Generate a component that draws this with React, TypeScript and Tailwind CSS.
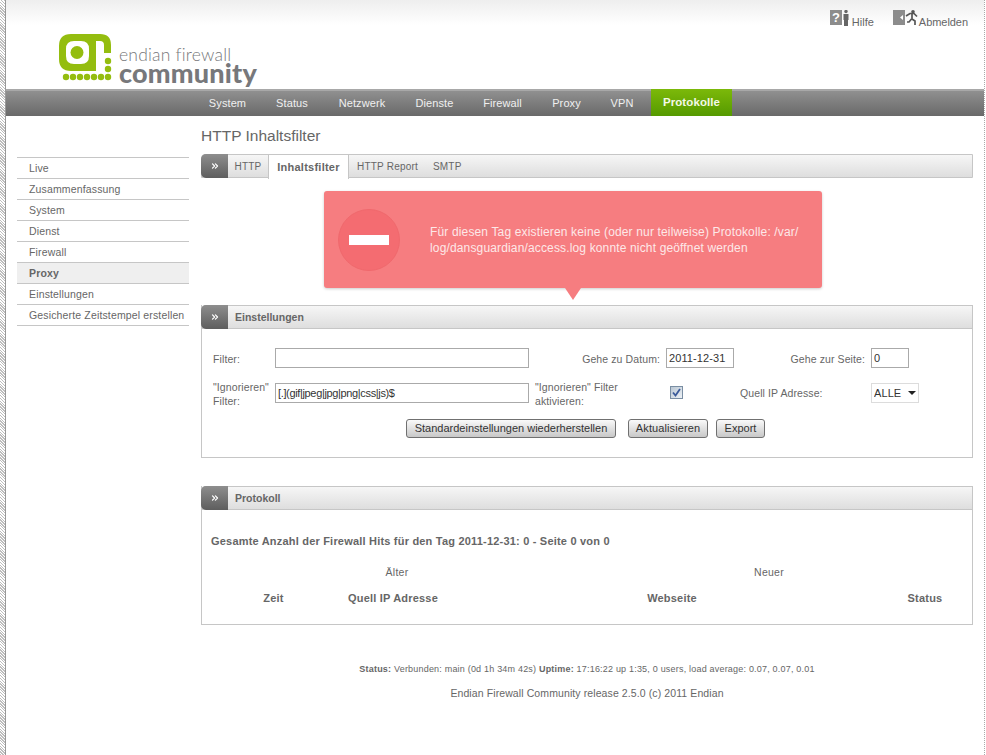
import { ChevronsRight } from 'lucide-react';

const topNav = [
  { label: 'System', width: 'w-[67px]' },
  { label: 'Status', width: 'w-[62px]' },
  { label: 'Netzwerk', width: 'w-[78px]' },
  { label: 'Dienste', width: 'w-[67px]' },
  { label: 'Firewall', width: 'w-[69px]' },
  { label: 'Proxy', width: 'w-[59px]' },
  { label: 'VPN', width: 'w-[52px]' },
];

const sideNav = ['Live', 'Zusammenfassung', 'System', 'Dienst', 'Firewall', 'Proxy', 'Einstellungen', 'Gesicherte Zeitstempel erstellen'];

function Logo() {
  return (
    <div className="flex items-start">
      <svg width="54" height="48" viewBox="0 0 54 48" className="mt-[1px]">
        <path
          fillRule="evenodd"
          fill="#94bd0f"
          d="M13 0H42Q53 0 53 11V19H46V11Q46 7 42 7H38V37H13Q1 37 1 25V12Q1 0 13 0ZM16 7Q8 7 8 15V22Q8 30 16 30H23Q31 30 31 22V15Q31 7 23 7Z"
        />
        <circle cx="19" cy="18.5" r="6.5" fill="#94bd0f" />
        {[27, 35, 43].map((y) => (
          <circle key={y} cx="50" cy={y} r="3.2" fill="#94bd0f" />
        ))}
        {[8, 15, 22, 29, 36, 43].map((x) => (
          <circle key={x} cx={x} cy="43" r="3.2" fill="#94bd0f" />
        ))}
      </svg>
      <div className="ml-[7px] mt-[13px] text-[#77787b]">
        <div className="font-['Lato',sans-serif] text-[17.5px] leading-[17px] font-light tracking-[0.2px]">endian firewall</div>
        <div className="font-['Lato',sans-serif] text-[27px] leading-[20px] font-black tracking-[0.2px]">community</div>
      </div>
    </div>
  );
}

function HelpIcon() {
  return (
    <svg width="20" height="16" viewBox="0 0 20 16">
      <rect x="0" y="0" width="12" height="15" fill="#8c8c8c" />
      <text x="6" y="12" textAnchor="middle" fontSize="13" fontWeight="700" fill="#fff" fontFamily="Liberation Sans">?</text>
      <circle cx="16" cy="1.500" r="1.700" fill="#666" />
      <path d="M13.500 4H18.500V10H18V16H14V10H13.500Z" fill="#666" />
    </svg>
  );
}

function ExitIcon() {
  return (
    <svg width="25" height="16" viewBox="0 0 25 16">
      <rect x="0" y="0" width="12" height="15" fill="#8c8c8c" />
      <path d="M7 7.500L10 5V10Z" fill="#fff" />
      <circle cx="20" cy="1.800" r="1.800" fill="#555" />
      <path d="M13 6L17 3.500H21L24 6.500M19 4V9L22 11V15M18.500 9L16 12H14" fill="none" stroke="#555" strokeWidth="1.700" />
    </svg>
  );
}

function SectionHeader({ title }: { title: string }) {
  return (
    <div className="flex h-[24px] items-stretch rounded-tl-[4px] rounded-tr-[1px] border border-[#c6c6c6] bg-gradient-to-b from-[#f6f6f6] to-[#dedede]">
      <DarkButton />
      <span className="ml-[7px] self-center pt-[1px] text-[10.500px] font-bold text-[#666]">{title}</span>
    </div>
  );
}

function DarkButton() {
  return (
    <div className="-my-[1px] -ml-[1px] flex w-[27px] items-center justify-center rounded-l-[5px] bg-gradient-to-b from-[#8e8e8e] to-[#5e5e5e]">
      <ChevronsRight size={10} strokeWidth={3} color="#fff" />
    </div>
  );
}

function TextField({ value = '', className }: { value?: string; className: string }) {
  return (
    <input
      readOnly
      value={value}
      className={`h-[20px] border border-[#aaaaaa] bg-white px-[2px] text-[11px] text-[#333] outline-none ${className}`}
    />
  );
}

function FormButton({ label, className }: { label: string; className: string }) {
  return (
    <button
      type="button"
      className={`h-[19px] whitespace-nowrap rounded-[3px] border border-[#707070] bg-gradient-to-b from-[#fafafa] to-[#c8c8c8] text-[11px] text-[#333] ${className}`}
    >
      {label}
    </button>
  );
}

export default function App() {
  return (
    <div className="flex min-h-[755px] bg-white font-['Liberation_Sans',Arial,sans-serif] text-[#666]">
      <div className="w-[5px] shrink-0 bg-[repeating-linear-gradient(45deg,#bdbdbd_0,#bdbdbd_1px,#ffffff_1px,#ffffff_2px)]" />
      <div className="w-[1px] shrink-0 bg-[#999]" />

      <div className="min-w-0 flex-1">
        <header className="relative h-[89px] bg-gradient-to-b from-[#eeeeee] to-white to-[28%] pl-[52px] pt-[33px]">
          <Logo />
          <div className="absolute right-[16px] top-[10px] flex items-start text-[11px] text-[#666]">
            <div className="flex items-start">
              <HelpIcon />
              <span className="ml-[2px] mt-[4px]">Hilfe</span>
            </div>
            <div className="ml-[19px] flex items-start">
              <ExitIcon />
              <span className="ml-[1px] mt-[4px] tracking-[-0.05px]">Abmelden</span>
            </div>
          </div>
        </header>

        <nav className="flex h-[27px] items-stretch border-t-2 border-[#a8a8a8] bg-gradient-to-b from-[#909090] to-[#696969] pl-[188px] text-[11px] text-[#f0f0f0]">
          {topNav.map((item) => (
            <a key={item.label} className={`flex items-center justify-center tracking-[0.1px] ${item.width}`}>
              {item.label}
            </a>
          ))}
          <a className="ml-[3px] -mt-[2px] flex w-[81px] items-center justify-center bg-gradient-to-b from-[#7cb90a] to-[#559a00] text-[11.500px] font-bold tracking-[0.1px] text-[#f4f8e8]">
            Protokolle
          </a>
        </nav>

        <div className="flex">
          <aside className="ml-[11px] mt-[41px] w-[172px] shrink-0 border-t border-[#c6c6c6] text-[10.500px] tracking-[0.15px]">
            {sideNav.map((item) => (
              <div
                key={item}
                className={`flex h-[21px] items-center whitespace-nowrap border-b border-[#c6c6c6] pl-[12px] pt-[1px] ${
                  item === 'Proxy' ? 'bg-[#efefef] font-bold' : ''
                }`}
              >
                {item}
              </div>
            ))}
          </aside>

          <main className="ml-[12px] w-[772px] shrink-0">
            <h1 className="mt-[8px] h-[24px] text-[15.5px] leading-[24px] text-[#666]">HTTP Inhaltsfilter</h1>

            <div className="mt-[6px] flex h-[24px] items-stretch rounded-tl-[4px] border border-[#c6c6c6] bg-gradient-to-b from-[#f6f6f6] to-[#dedede] text-[10px] tracking-[0.2px]">
              <DarkButton />
              <a className="flex w-[40px] items-center justify-center bg-gradient-to-b from-[#f6f6f6] to-[#dedede] pt-[1px]">HTTP</a>
              <a className="relative z-10 -my-[1px] flex h-[25px] w-[81px] items-center justify-center border-x border-t border-[#c6c6c6] bg-white pt-[1px] text-[11px] font-bold tracking-[0.25px]">
                Inhaltsfilter
              </a>
              <a className="ml-[8px] flex items-center pt-[1px]">HTTP Report</a>
              <a className="ml-[15px] flex items-center pt-[1px]">SMTP</a>
            </div>

            <div className="relative ml-[123px] mt-[13px] flex h-[97px] w-[498px] items-center rounded-[3px] bg-[#f67d80] pl-[14px] shadow-[0_1px_3px_rgba(0,0,0,0.2)]">
              <div className="flex h-[62px] w-[62px] shrink-0 items-center justify-center rounded-full border border-[#f0696d] bg-[#f46c71]">
                <div className="h-[10px] w-[40px] bg-white" />
              </div>
              <p className="ml-[30px] text-[12px] leading-[16px] tracking-[0.15px] text-[#fde8e8]">
                Für diesen Tag existieren keine (oder nur teilweise) Protokolle: /var/
                <br />
                log/dansguardian/access.log konnte nicht geöffnet werden
              </p>
              <div className="absolute left-[241px] top-[97px] h-0 w-0 border-x-[8px] border-t-[12px] border-x-transparent border-t-[#f67d80]" />
            </div>

            <section className="mt-[17px] h-[153px] border-x border-b border-[#c6c6c6]">
              <div className="-mx-[1px]">
                <SectionHeader title="Einstellungen" />
              </div>
              <div className="ml-[11px] mt-[19px] grid grid-cols-[62px_254px_137px_68px_137px_auto] items-start gap-y-[14px] text-[10.500px] tracking-[0.1px]">
                <label className="pt-[1px] leading-[20px]">Filter:</label>
                <TextField className="w-[254px]" />
                <label className="pr-[6px] pt-[1px] text-right leading-[20px]">Gehe zu Datum:</label>
                <TextField value="2011-12-31" className="w-[68px]" />
                <label className="pr-[6px] pt-[1px] text-right leading-[20px]">Gehe zur Seite:</label>
                <TextField value="0" className="w-[38px]" />

                <label className="-mt-[3px] leading-[14px]">
                  "Ignorieren"
                  <br />
                  Filter:
                </label>
                <TextField value="[.](gif|jpeg|jpg|png|css|js)$" className="w-[254px] tracking-[-0.35px]" />
                <label className="-mt-[3px] pl-[6px] leading-[14px]">
                  "Ignorieren" Filter
                  <br />
                  aktivieren:
                </label>
                <div className="flex items-center pl-[4px] pt-[3px]">
                  <div className="flex h-[13px] w-[13px] items-center justify-center border border-[#7a8ea3] bg-gradient-to-br from-[#b9c6d3] to-[#eef2f6]">
                    <svg width="9" height="9" viewBox="0 0 9 9">
                      <path d="M1 4.500L3.500 7.500L8 1" fill="none" stroke="#3b5a9a" strokeWidth="1.800" />
                    </svg>
                  </div>
                </div>
                <label className="pl-[6px] leading-[20px]">Quell IP Adresse:</label>
                <div className="relative h-[20px] w-[48px]">
                  <select className="h-[20px] w-[48px] appearance-none border border-[#dcdcdc] bg-white pl-[2px] text-[11px] text-[#333] outline-none">
                    <option>ALLE</option>
                  </select>
                  <div className="absolute right-[3px] top-[8px] h-0 w-0 border-x-[4px] border-t-[4px] border-x-transparent border-t-[#222]" />
                </div>
              </div>
              <div className="ml-[204px] mt-[11px] flex">
                <FormButton label="Standardeinstellungen wiederherstellen" className="w-[210px]" />
                <FormButton label="Aktualisieren" className="ml-[12px] w-[80px] tracking-[0.1px]" />
                <FormButton label="Export" className="ml-[8px] w-[49px]" />
              </div>
            </section>

            <section className="mt-[28px] h-[139px] border-x border-b border-[#c6c6c6]">
              <div className="-mx-[1px]">
                <SectionHeader title="Protokoll" />
              </div>
              <p className="ml-[9px] mt-[24px] text-[11px] leading-[14px] font-bold tracking-[0.2px]">
                Gesamte Anzahl der Firewall Hits für den Tag 2011-12-31: 0 - Seite 0 von 0
              </p>
              <div className="ml-[9px] mt-[17px] grid w-[744px] grid-cols-2 text-center text-[10.500px] tracking-[0.25px]">
                <span>Älter</span>
                <span>Neuer</span>
              </div>
              <div className="ml-[9px] mt-[9px] grid w-[745px] grid-cols-[125px_114px_444px_62px] text-center text-[11px] font-bold tracking-[0.2px]">
                <span>Zeit</span>
                <span>Quell IP Adresse</span>
                <span>Webseite</span>
                <span>Status</span>
              </div>
            </section>

            <footer className="mt-[38px] text-center">
              <p className="text-[9px] leading-[12px] tracking-[0.2px]">
                <b>Status:</b> Verbunden: main (0d 1h 34m 42s) <b>Uptime:</b> 17:16:22 up 1:35, 0 users, load average: 0.07, 0.07, 0.01
              </p>
              <p className="mt-[11px] text-[10.500px] leading-[14px] tracking-[0.1px]">Endian Firewall Community release 2.5.0 (c) 2011 Endian</p>
            </footer>
          </main>
        </div>
      </div>

      <div className="mr-[1px] w-[1px] shrink-0 bg-[repeating-linear-gradient(0deg,#aaaaaa_0,#aaaaaa_1px,#ffffff_1px,#ffffff_2px)]" />
    </div>
  );
}
